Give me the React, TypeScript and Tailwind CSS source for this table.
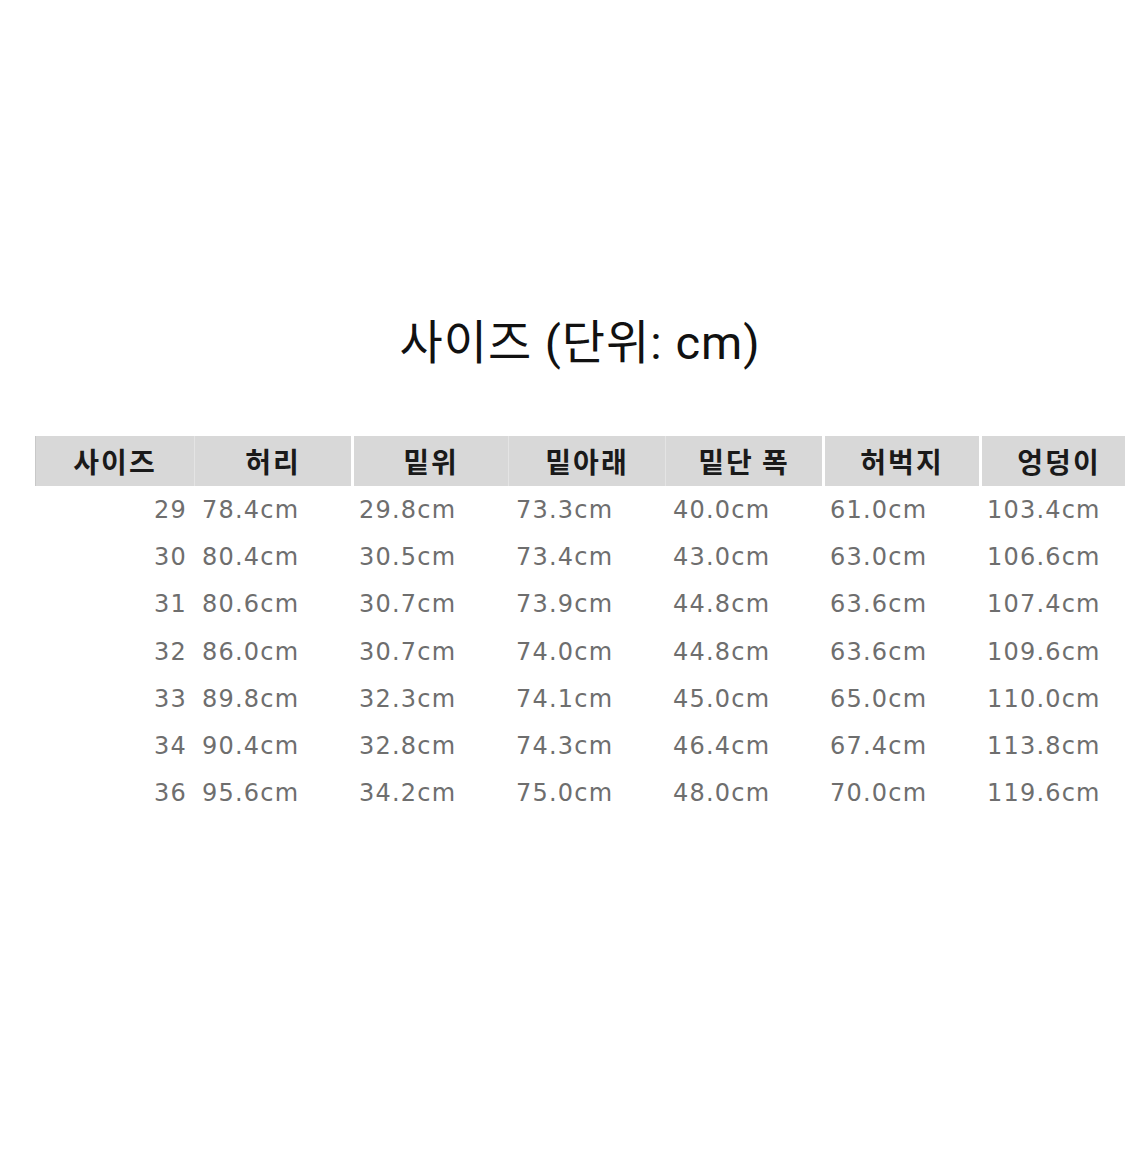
import React from "react";

const headers = ["사이즈", "허리", "밑위", "밑아래", "밑단 폭", "허벅지", "엉덩이"];
const rows: string[][] = [
  ["29", "78.4cm", "29.8cm", "73.3cm", "40.0cm", "61.0cm", "103.4cm"],
  ["30", "80.4cm", "30.5cm", "73.4cm", "43.0cm", "63.0cm", "106.6cm"],
  ["31", "80.6cm", "30.7cm", "73.9cm", "44.8cm", "63.6cm", "107.4cm"],
  ["32", "86.0cm", "30.7cm", "74.0cm", "44.8cm", "63.6cm", "109.6cm"],
  ["33", "89.8cm", "32.3cm", "74.1cm", "45.0cm", "65.0cm", "110.0cm"],
  ["34", "90.4cm", "32.8cm", "74.3cm", "46.4cm", "67.4cm", "113.8cm"],
  ["36", "95.6cm", "34.2cm", "75.0cm", "48.0cm", "70.0cm", "119.6cm"],
];

const dividerClass = [
  "",
  "border-l border-l-[#e4e4e4]",
  "border-l-[3px] border-l-white",
  "border-l border-l-[#e4e4e4]",
  "border-l border-l-[#e4e4e4]",
  "border-l-[3px] border-l-white",
  "border-l-[3px] border-l-white",
];

export default function App() {
  return (
    <div className="w-[1125px] h-[1166px] bg-white overflow-hidden">
      <div className="ml-[35px] w-[1090px] pt-[309px]">
        <div
          className="text-center text-[47px] leading-[68px] tracking-[1px] text-[#111]"
          style={{ fontFamily: 'Roboto, "Noto Sans CJK KR", sans-serif' }}
        >
          사이즈 (단위: cm)
        </div>
        <div className="mt-[59px] w-[1099px]">
          <div className="grid grid-cols-[158px_157px_157px_157px_157px_157px_157px] h-[50px] bg-[#d8d8d8] border-l border-l-[#c8c8c8]">
            {headers.map((h, i) => (
              <div
                key={i}
                className={`flex items-center justify-center font-bold text-[28px] tracking-[2px] text-[#1a1a1a] ${dividerClass[i]}`}
                style={{ fontFamily: '"Noto Sans CJK KR", sans-serif' }}
              >
                {h}
              </div>
            ))}
          </div>
          {rows.map((r, ri) => (
            <div
              key={ri}
              className="grid grid-cols-[158px_157px_157px_157px_157px_157px_157px] h-[47.3px] text-[24px] text-[#6e6e6e] tracking-[1.2px]"
              style={{ fontFamily: '"DejaVu Sans", Verdana, sans-serif' }}
            >
              {r.map((c, ci) => (
                <div
                  key={ci}
                  className={
                    ci === 0
                      ? "flex items-center justify-end pr-[6px]"
                      : "flex items-center pl-[9px]"
                  }
                >
                  {c}
                </div>
              ))}
            </div>
          ))}
        </div>
      </div>
    </div>
  );
}
